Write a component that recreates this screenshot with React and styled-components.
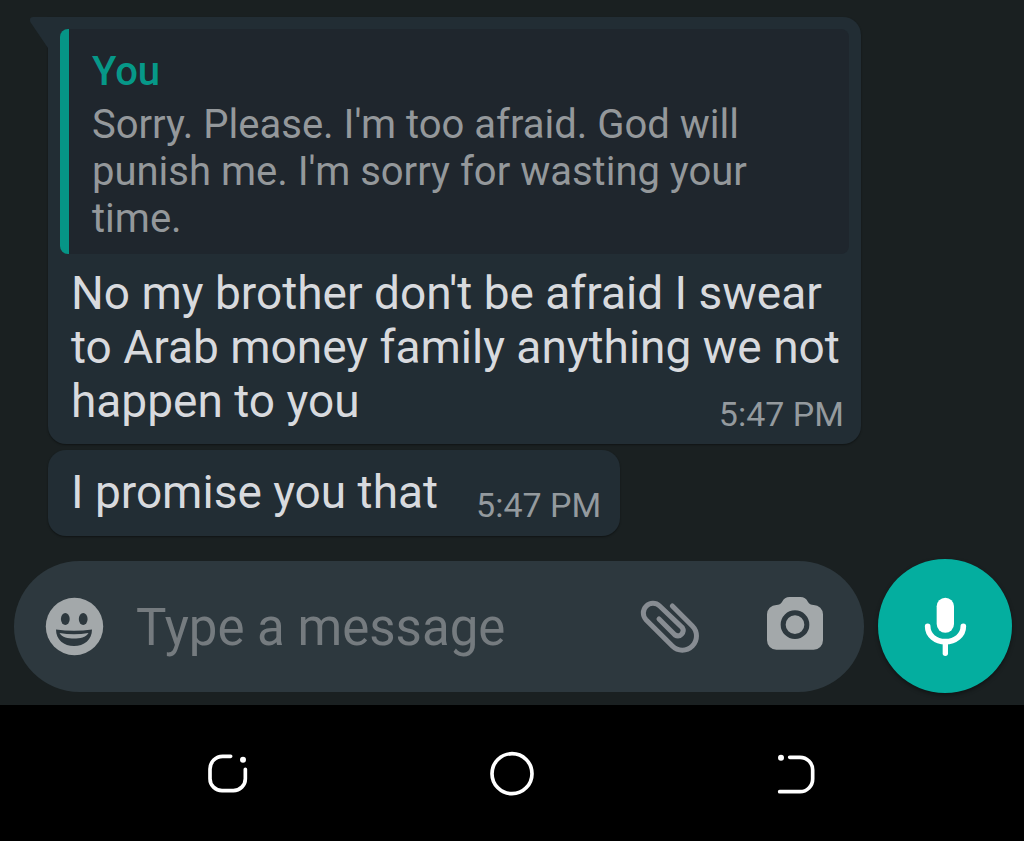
import React, { useState } from 'react'
import styled, { createGlobalStyle } from 'styled-components'

const App = () => {
  const [text, setText] = useState('')

  return (
    <Screen>
      <GlobalStyle />
      <Chat>
        <Messages>
          <Bubble $first>
            <Tail viewBox="0 0 20 32" aria-hidden="true">
              <path d="M20 0H4C1 0 0 3 2 6L19 31H20Z" />
            </Tail>
            <Quote>
              <h4>You</h4>
              <p>Sorry. Please. I'm too afraid. God will punish me. I'm sorry for wasting your time.</p>
            </Quote>
            <Text>
              No my brother don't be afraid I swear to Arab money family anything we not happen to you
              <Time>5:47 PM</Time>
            </Text>
          </Bubble>
          <Bubble>
            <Text>
              I promise you that
              <Time>5:47 PM</Time>
            </Text>
          </Bubble>
        </Messages>
        <Composer onSubmit={(e) => e.preventDefault()}>
          <Field>
            <IconButton type="button" aria-label="Emoji">
              <svg width="60" height="60" viewBox="0 0 60 60">
                <circle cx="30.5" cy="30.5" r="28.7" fill="#a3a8aa" />
                <ellipse cx="21.3" cy="23" rx="4.4" ry="6" fill="#2d383e" />
                <ellipse cx="39.2" cy="23" rx="4.4" ry="6" fill="#2d383e" />
                <path d="M12 33.5Q30 36 48 33.5C48 44 40 50 30 50C20 50 12 44 12 33.5Z" fill="#2d383e" />
                <path d="M15.5 37Q30 39.5 44.5 37C42 41.5 36 42.5 30 42.5C24 42.5 18 41.5 15.5 37Z" fill="#a3a8aa" />
              </svg>
            </IconButton>
            <Input
              type="text"
              aria-label="Message"
              placeholder="Type a message"
              value={text}
              onChange={(e) => setText(e.target.value)}
            />
            <IconButton type="button" aria-label="Attach">
              <svg width="68" height="60" viewBox="108 138 204 180" fill="none" stroke="#878c92" strokeWidth="15" strokeLinecap="round">
                <path d="M217 168L277 228A42.4 42.4 0 0 1 217 288L138 209A29 29 0 0 1 179 168L247 233A16 16 0 0 1 225 255L177 207" />
              </svg>
            </IconButton>
            <IconButton type="button" aria-label="Camera">
              <svg width="60" height="60" viewBox="495 138 180 180">
                <path
                  fill="#a3a8aa"
                  d="M529 165Q541 165 546 156Q553 141 569 141H601Q617 141 624 156Q629 165 641 165A28 28 0 0 1 669 193V271A28 28 0 0 1 641 299H529A28 28 0 0 1 501 271V193A28 28 0 0 1 529 165Z"
                />
                <circle cx="585" cy="224" r="35.5" fill="none" stroke="#2d383e" strokeWidth="15" />
              </svg>
            </IconButton>
          </Field>
          <MicButton type="button" aria-label="Record voice message">
            <svg width="60" height="60" viewBox="945 138 180 180">
              <rect x="1010" y="143" width="52" height="105" rx="26" fill="#fff" />
              <path d="M983 229C983 256 1006 275 1036 275C1066 275 1090 256 1090 229" fill="none" stroke="#fff" strokeWidth="17" strokeLinecap="round" />
              <path d="M1036 275V310" stroke="#fff" strokeWidth="16" strokeLinecap="round" />
            </svg>
          </MicButton>
        </Composer>
      </Chat>
      <SystemBar>
        <NavButton type="button" aria-label="Recent apps">
          <NavIcon viewBox="72 57 144 144">
            <path d="M152 79H128A38 38 0 0 0 90 117V146A36 36 0 0 0 126 182H160A36 36 0 0 0 196 146V118" />
            <Dot cx="189" cy="89" r="9" />
          </NavIcon>
        </NavButton>
        <NavButton type="button" aria-label="Home">
          <NavIcon viewBox="84 57 144 144">
            <circle cx="156" cy="131" r="60" />
          </NavIcon>
        </NavButton>
        <NavButton type="button" aria-label="Back">
          <NavIcon viewBox="96 57 144 144">
            <path d="M149 82H180A38 38 0 0 1 218 120V147A38 38 0 0 1 180 185H119" />
            <Dot cx="123" cy="83" r="9" />
          </NavIcon>
        </NavButton>
      </SystemBar>
    </Screen>
  )
}

export default App

const GlobalStyle = createGlobalStyle`
* {
    box-sizing: border-box;
    margin: 0;
    padding: 0;
}
body {
    background-color: #000;
    font-family: Roboto, "Liberation Sans", sans-serif;
}
button {
    border: none;
    background: none;
    cursor: pointer;
}
svg {
    display: block;
}
`
const Screen = styled.div`
display: flex;
flex-direction: column;
min-height: 100vh;
`
const Chat = styled.main`
flex: 1;
display: flex;
flex-direction: column;
justify-content: space-between;
gap: 20px;
padding: 17px 12px 12px 14px;
background-color: #1a2021;
`
const Messages = styled.div`
display: flex;
flex-direction: column;
align-items: flex-start;
gap: 6px;
padding: 0 151px 0 34px;
`
const Bubble = styled.div`
position: relative;
padding: ${({ $first }) => ($first ? '12px 12px 10px' : '15px 14px 11px 12px')};
border-radius: ${({ $first }) => ($first ? '0 18px 18px 18px' : '18px')};
background-color: #222d34;
box-shadow: 0 1px 2px rgba(0, 0, 0, 0.4);
`
const Tail = styled.svg`
position: absolute;
top: 0;
left: -19px;
width: 20px;
height: 32px;
fill: #222d34;
`
const Quote = styled.blockquote`
display: flex;
flex-direction: column;
gap: 6px;
margin-bottom: 12px;
padding: 19px 23px 12px;
border-left: 9px solid #069586;
border-radius: 8px;
background-color: #1f262d;
font-size: 40px;
line-height: 47px;
color: #94989b;
h4 {
    font-size: 40px;
    font-weight: 500;
    color: #069888;
}
`
const Text = styled.p`
display: flow-root;
padding: 0 5px 0 11px;
font-size: 46px;
line-height: 54px;
color: #d8dade;
`
const Time = styled.time`
float: right;
margin: 20px 0 0 38px;
font-size: 34px;
line-height: 40px;
color: #949a9e;
`
const Composer = styled.form`
display: flex;
align-items: center;
gap: 14px;
`
const Field = styled.div`
flex: 1;
min-width: 0;
display: flex;
align-items: center;
height: 131px;
padding: 0 39px 0 30px;
border-radius: 66px;
background-color: #2d383e;
`
const IconButton = styled.button`
flex: none;
& + & {
    margin-left: 61px;
}
`
const Input = styled.input`
flex: 1;
min-width: 0;
margin-left: 32px;
padding-top: 4px;
border: none;
outline: none;
background: none;
font-family: inherit;
font-size: 51px;
line-height: 60px;
color: #d8dade;
&::placeholder {
    color: #757b7f;
    opacity: 1;
}
`
const MicButton = styled.button`
flex: none;
display: flex;
align-items: center;
justify-content: center;
width: 134px;
height: 134px;
border-radius: 50%;
background-color: #04ae9f;
box-shadow: 0 2px 4px rgba(0, 0, 0, 0.4);
`
const SystemBar = styled.nav`
display: flex;
align-items: center;
height: 136px;
padding: 0 86px;
background-color: #000;
`
const NavButton = styled.button`
flex: 1;
display: flex;
justify-content: center;
`
const NavIcon = styled.svg`
width: 48px;
height: 48px;
fill: none;
stroke: #fff;
stroke-width: 11;
stroke-linecap: round;
`
const Dot = styled.circle`
fill: #fff;
stroke: none;
`
